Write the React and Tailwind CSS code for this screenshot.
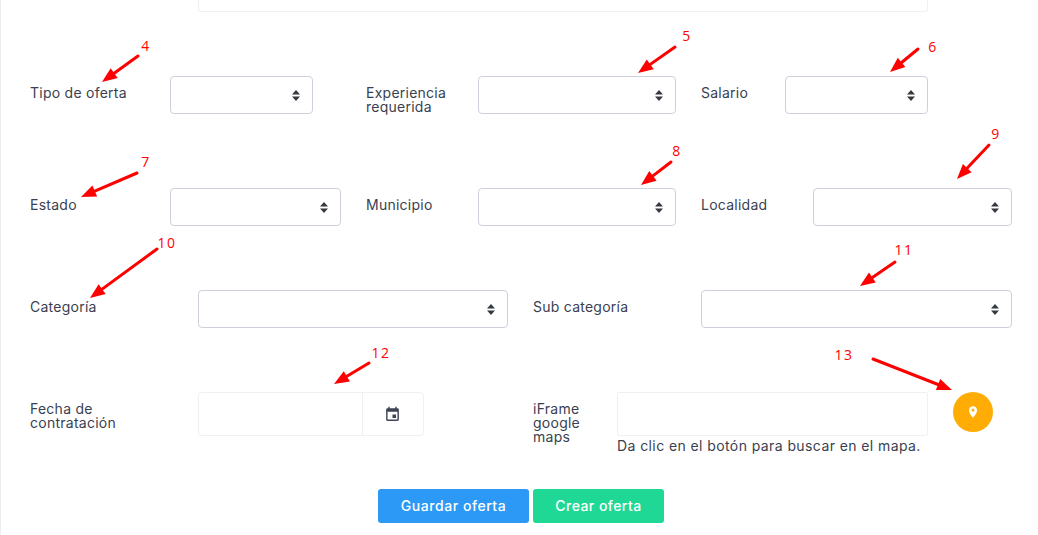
import { useId } from 'react';

const arrows = [
  [138, 56, 102, 82],
  [675, 47, 638, 73],
  [918, 49, 890, 72],
  [137, 173, 81, 197],
  [671, 162, 641, 185],
  [989, 145, 957, 179],
  [157, 249, 90, 298],
  [895, 262, 860, 286],
  [369, 363, 334, 384],
  [873, 359, 952, 390],
];

const numbers = [
  ['4', 146, 46],
  ['5', 687, 36],
  ['6', 933, 47],
  ['7', 146, 162],
  ['8', 677, 151],
  ['9', 996, 134],
  ['10', 167, 243],
  ['11', 904, 250],
  ['12', 381, 353],
  ['13', 844, 355],
];

function Arrow({ from }) {
  const [x1, y1, x2, y2] = from;
  const a = Math.atan2(y2 - y1, x2 - x1);
  const len = 15;
  const wing = 6;
  const bx = x2 - Math.cos(a) * len;
  const by = y2 - Math.sin(a) * len;
  const nx = -Math.sin(a) * wing;
  const ny = Math.cos(a) * wing;
  return (
    <g>
      <line x1={x1} y1={y1} x2={bx} y2={by} stroke="#fe0000" strokeWidth="3" strokeLinecap="round" />
      <polygon points={`${x2},${y2} ${bx + nx},${by + ny} ${bx - nx},${by - ny}`} fill="#fe0000" />
    </g>
  );
}

function Select({ className }) {
  const id = useId();
  return (
    <div className={`relative h-[38px] shrink-0 ${className}`}>
      <select id={id} className="h-full w-full appearance-none rounded-[4px] border border-[#ced1dc] bg-white"></select>
      <svg className="absolute right-[13px] top-[14px] pointer-events-none" width="8" height="11" viewBox="0 0 8 11">
        <path d="M4 0 L8 4.5 L0 4.5 Z M0 6.5 L8 6.5 L4 11 Z" fill="#343a40" />
      </svg>
    </div>
  );
}

function Label({ className, children }) {
  return <label className={`shrink-0 pt-[10px] text-[14px] leading-[14px] tracking-[0.25px] ${className}`}>{children}</label>;
}

export default function App() {
  return (
    <div className="relative h-[535px] w-[1038px] overflow-hidden border-l border-[#ebedf3] bg-white font-['Inter','Noto_Sans',sans-serif] text-[#3a3f51]">
      {/* parte final del campo anterior */}
      <div className="ml-[197px] h-[12px] w-[730px] rounded-b-[3px] border-x border-b border-[#f0f0f3]"></div>

      <div className="pl-[29px]">
        {/* Tipo / experiencia / salario */}
        <div className="mt-[64px] flex">
          <Label className="w-[140px]">Tipo de oferta</Label>
          <Select className="w-[143px]" />
          <Label className="ml-[53px] w-[112px]">
            Experiencia
            <br />
            requerida
          </Label>
          <Select className="w-[198px]" />
          <Label className="ml-[25px] w-[84px]">Salario</Label>
          <Select className="w-[143px]" />
        </div>

        {/* Estado / municipio / localidad */}
        <div className="mt-[74px] flex">
          <Label className="w-[140px]">Estado</Label>
          <Select className="w-[171px]" />
          <Label className="ml-[25px] w-[112px]">Municipio</Label>
          <Select className="w-[198px]" />
          <Label className="ml-[25px] w-[112px]">Localidad</Label>
          <Select className="w-[199px]" />
        </div>

        {/* Categoria */}
        <div className="mt-[64px] flex">
          <Label className="w-[168px]">Categoría</Label>
          <Select className="w-[310px]" />
          <Label className="ml-[25px] w-[168px]">Sub categoría</Label>
          <Select className="w-[311px]" />
        </div>

        {/* Fecha / iframe */}
        <div className="mt-[64px] flex">
          <Label className="w-[168px]">
            Fecha de
            <br />
            contratación
          </Label>
          <div className="flex h-[44px] w-[226px] shrink-0 overflow-hidden rounded-[4px] border border-[#f0f0f3]">
            <input className="min-w-0 flex-1" />
            <div className="flex w-[61px] items-center justify-center border-l border-[#f0f0f3] pr-[2px] pt-[1px]">
              <svg width="17" height="17" viewBox="0 0 24 24" fill="#3f4454">
                <path d="M17 12h-5v5h5v-5zM16 1v2H8V1H6v2H5c-1.11 0-1.99.9-1.99 2L3 19c0 1.1.89 2 2 2h14c1.1 0 2-.9 2-2V5c0-1.1-.9-2-2-2h-1V1h-2zm3 18H5V8h14v11z" />
              </svg>
            </div>
          </div>
          <Label className="ml-[109px] w-[84px]">
            iFrame
            <br />
            google
            <br />
            maps
          </Label>
          <div className="w-[311px] shrink-0">
            <input className="block h-[44px] w-full rounded-[2px] border border-[#f0f0f3]" />
            <p className="whitespace-nowrap text-[14px] leading-[19px] tracking-[0.41px]">Da clic en el botón para buscar en el mapa.</p>
          </div>
          <button className="ml-[25px] flex h-[40px] w-[40px] shrink-0 items-center justify-center rounded-full bg-[#ffad05]">
            <svg width="14" height="14" viewBox="0 0 24 24" fill="#fff">
              <path d="M12 2C8.13 2 5 5.13 5 9c0 5.25 7 13 7 13s7-7.75 7-13c0-3.87-3.13-7-7-7zm0 9.5c-1.38 0-2.5-1.12-2.5-2.5s1.12-2.5 2.5-2.5 2.5 1.12 2.5 2.5-1.12 2.5-2.5 2.5z" />
            </svg>
          </button>
        </div>
      </div>

      <div className="mt-[34px] flex justify-start gap-[4px] pl-[377px]">
        <button className="h-[34px] w-[151px] rounded-[3px] bg-[#2b99f5] pb-[2px] text-[14px] font-medium tracking-[0.55px] text-white">Guardar oferta</button>
        <button className="h-[34px] w-[131px] rounded-[3px] bg-[#1fd896] pb-[2px] text-[14px] font-medium tracking-[0.45px] text-white">Crear oferta</button>
      </div>

      {/* anotaciones en rojo */}
      <svg className="absolute -left-px top-0 pointer-events-none" width="1038" height="535">
        {arrows.map((a, i) => (
          <Arrow key={i} from={a} />
        ))}
      </svg>
      {numbers.map(([n, x, y]) => (
        <span
          key={n}
          className="absolute -translate-x-1/2 -translate-y-1/2 font-['Open_Sans',sans-serif] text-[14px] leading-none tracking-[1.5px] text-[#fe0000]"
          style={{ left: x - 1, top: y }}
        >
          {n}
        </span>
      ))}
    </div>
  );
}
